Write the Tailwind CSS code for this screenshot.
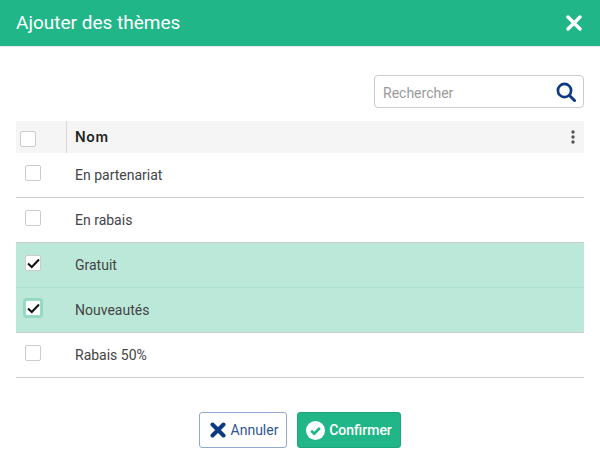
<!DOCTYPE html>
<html lang="fr"><head><meta charset="utf-8">
<script src="https://cdn.jsdelivr.net/npm/@tailwindcss/browser@4"></script>
</head>
<body class="bg-white font-['Roboto',sans-serif] w-[600px] h-[467px] overflow-hidden">
<header class="h-[46px] bg-[#20b687] flex items-center justify-between pl-4 pr-[18px] shadow-[0_1px_1px_rgba(0,0,0,0.08)]">
  <h1 class="text-[19px] text-white font-normal">Ajouter des thèmes</h1>
  <svg class="w-[16px] h-[16px] -mt-[1px]" viewBox="0 0 16 16"><path d="M2 2L14 14M14 2L2 14" stroke="#fff" stroke-width="3.4" stroke-linecap="round"/></svg>
</header>
<main class="px-4">
  <div class="flex justify-end pt-[29px] pb-[13px]">
    <div class="w-[210px] h-[33px] border border-[#ccc] rounded-[4px] flex items-center justify-between pl-2 pr-[7px]">
      <span class="text-[14px] text-[#9a9a9a] pt-[4px]">Rechercher</span>
      <svg class="w-[20px] h-[20px]" viewBox="0 0 20 20" fill="none"><circle cx="8.5" cy="8.5" r="6.6" stroke="#0b3a82" stroke-width="2.7"/><path d="M13.5 13.5L18.5 18.5" stroke="#0b3a82" stroke-width="3" stroke-linecap="round"/></svg>
    </div>
  </div>
  <div class="h-[32px] bg-[#f5f5f5] flex items-center">
    <div class="w-[51px] h-full flex items-center border-r border-[#d8d8d8] pl-1 pt-[3px]">
      <span class="block w-4 h-4 bg-white border border-[#ccc] rounded-[2px]"></span>
    </div>
    <span class="pl-2 flex-1 text-[14px] font-semibold text-[#222] font-['Inter',sans-serif] tracking-[0.7px] -mt-[1px]">Nom</span>
    <svg class="w-[4px] h-[14px] mr-[9px]" viewBox="0 0 4 14" fill="#555"><circle cx="2" cy="2" r="1.7"/><circle cx="2" cy="7" r="1.7"/><circle cx="2" cy="12" r="1.7"/></svg>
  </div>
  <div class="h-[45px] flex border-b border-[#ccc]">
    <div class="w-[59px] pl-[9px] pt-[12px]"><span class="block w-4 h-4 bg-white border border-[#ccc] rounded-[2px]"></span></div>
    <span class="text-[14px] text-[#444] pt-[12px]">En partenariat</span>
  </div>
  <div class="h-[45px] flex border-b border-[#ccc]">
    <div class="w-[59px] pl-[9px] pt-[12px]"><span class="block w-4 h-4 bg-white border border-[#ccc] rounded-[2px]"></span></div>
    <span class="text-[14px] text-[#444] pt-[12px]">En rabais</span>
  </div>
  <div class="h-[45px] flex border-b border-[#ace0cf] bg-[#bce8da]">
    <div class="w-[59px] pl-[9px] pt-[12px]"><span class="flex items-center justify-center w-4 h-4 bg-white border border-[#ccc] rounded-[2px]"><svg class="w-[13px] h-[11px]" viewBox="0 0 13 11" fill="none"><path d="M1 5.5L4.8 9L12 1.5" stroke="#111" stroke-width="2"/></svg></span></div>
    <span class="text-[14px] text-[#444] pt-[12px]">Gratuit</span>
  </div>
  <div class="h-[45px] flex border-b border-[#ccc] bg-[#bce8da]">
    <div class="w-[59px] pl-[9px] pt-[12px]"><span class="flex items-center justify-center w-4 h-4 bg-white border border-[#9fdcc8] rounded-[2px] shadow-[0_0_0_2px_#92d8c2]"><svg class="w-[13px] h-[11px]" viewBox="0 0 13 11" fill="none"><path d="M1 5.5L4.8 9L12 1.5" stroke="#111" stroke-width="2"/></svg></span></div>
    <span class="text-[14px] text-[#444] pt-[12px]">Nouveautés</span>
  </div>
  <div class="h-[45px] flex border-b border-[#ccc]">
    <div class="w-[59px] pl-[9px] pt-[12px]"><span class="block w-4 h-4 bg-white border border-[#ccc] rounded-[2px]"></span></div>
    <span class="text-[14px] text-[#444] pt-[12px]">Rabais 50%</span>
  </div>
  <div class="flex justify-center gap-[10px] pt-[34px]">
    <button class="w-[88px] h-[36px] border border-[#92aacf] rounded-[3px] bg-white flex items-center justify-center gap-[5px] pl-[2px] text-[14px] text-[#2f5690]">
      <svg class="w-[16px] h-[16px]" viewBox="0 0 16 16"><path d="M2.5 2.5L13.5 13.5M13.5 2.5L2.5 13.5" stroke="#0b3a82" stroke-width="4" stroke-linecap="round"/></svg><span class="pt-[1px]">Annuler</span>
    </button>
    <button class="w-[104px] h-[36px] border border-[#1ca67b] rounded-[3px] bg-[#20b687] flex items-center justify-center gap-[4px] text-[14px] font-medium text-white">
      <svg class="w-[19px] h-[19px]" viewBox="0 0 19 19"><circle cx="9.5" cy="9.5" r="9.5" fill="#fff"/><path d="M5.2 9.8L8.2 12.7L13.8 7" stroke="#20b687" stroke-width="2.6" fill="none"/></svg><span class="pt-[1px]">Confirmer</span>
    </button>
  </div>
</main>
</body></html>
